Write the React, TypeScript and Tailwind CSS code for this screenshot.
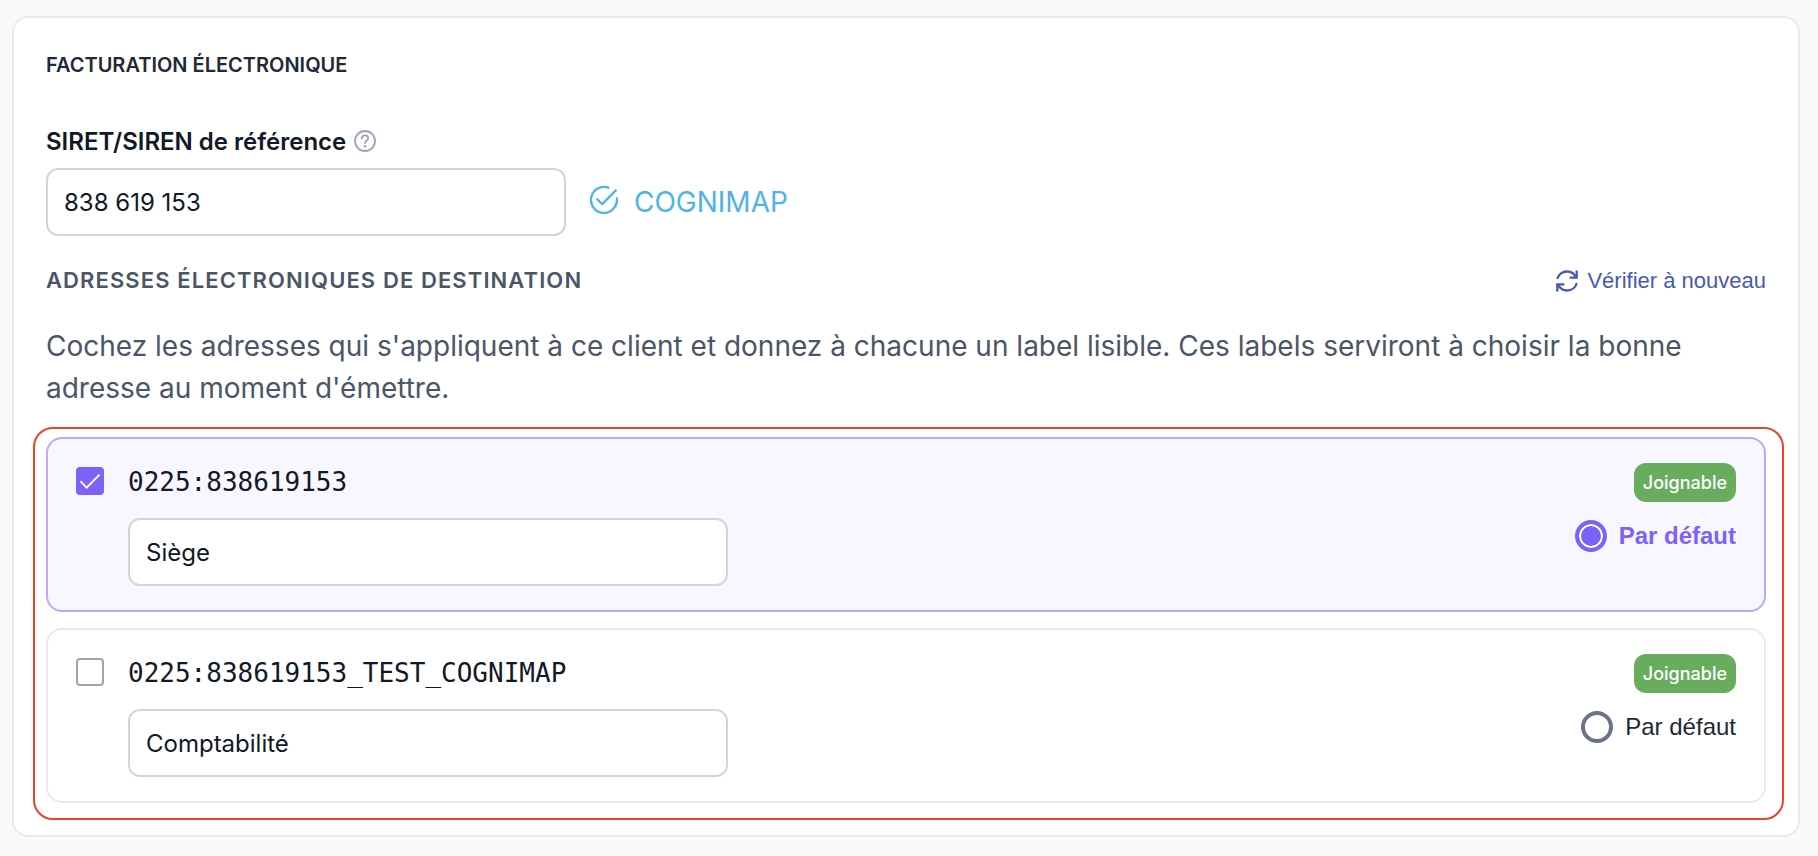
import React from 'react';

type Adresse = {
  id: string;
  label: string;
  joignable: boolean;
};

const ADRESSES: Adresse[] = [
  { id: '0225:838619153', label: 'Siège', joignable: true },
  { id: '0225:838619153_TEST_COGNIMAP', label: 'Comptabilité', joignable: true },
];

const inputClass =
  'h-[68px] rounded-xl border-2 border-[#d1d5db] bg-white px-4 text-2xl text-[#111827] outline-none';

// --- Icons ---
const HelpIcon: React.FC = () => (
  <svg className="size-[22px] text-[#9ca3b8]" viewBox="0 0 22 22" fill="none" stroke="currentColor" strokeWidth="1.8">
    <circle cx="11" cy="11" r="10" />
    <path d="M7.8 8.4c0-1.9 1.4-3 3.2-3s3.2 1.1 3.2 2.8c0 2.2-3.1 2.3-3.1 4.8" strokeLinecap="round" />
    <circle cx="11.1" cy="16.2" r="1.3" fill="currentColor" stroke="none" />
  </svg>
);

const ValidIcon: React.FC = () => (
  <svg
    className="mb-1 size-7"
    viewBox="0 0 28 28"
    fill="none"
    stroke="currentColor"
    strokeWidth="2.3"
    strokeLinecap="round"
    strokeLinejoin="round"
  >
    <path d="M18.4 1.7A13 13 0 1 0 26.900 12.500" />
    <path d="M7.200 13.300l5 4.800L25.800 4.400" />
  </svg>
);

const RefreshIcon: React.FC = () => (
  <svg className="size-[22px]" viewBox="0 0 22 22" fill="none" stroke="currentColor" strokeWidth="2.3">
    <path d="M1.200 9C2.400 4.600 6.200 1.500 11 1.500c4 0 7.200 2.200 9 5.700" />
    <path d="M20.700 0.500v7.100h-7" />
    <path d="M20.800 13c-1.200 4.400-5 7.500-9.800 7.500-4 0-7.200-2.200-9-5.700" />
    <path d="M1.300 21.500v-7.100h7" />
  </svg>
);

// --- Adresse ---
const AdresseCard: React.FC<{
  adresse: Adresse;
  checked: boolean;
  isDefault: boolean;
  onToggle: () => void;
  onDefault: () => void;
}> = ({ adresse, checked, isDefault, onToggle, onDefault }) => {
  const [label, setLabel] = React.useState(adresse.label);

  return (
    <li
      className={`flex items-start gap-6 rounded-2xl border-2 px-7 pt-6 pb-6 ${
        checked ? 'border-[#b9abf8] bg-[#f8f6ff]' : 'border-[#e9eaef] bg-white'
      }`}
    >
      <span className="relative mt-1 size-7 shrink-0">
        <input
          id={adresse.id}
          type="checkbox"
          checked={checked}
          onChange={onToggle}
          className="block size-7 appearance-none rounded border-2 border-[#9ca3b5] bg-white checked:border-[#7c62f8] checked:bg-[#7c62f8]"
        />
        {checked && (
          <svg
            className="pointer-events-none absolute inset-0 size-7 text-white"
            viewBox="0 0 28 28"
            fill="none"
            stroke="currentColor"
            strokeWidth="1.8"
          >
            <path d="M4.400 14.200l6.200 6.400L23.600 7.600" />
          </svg>
        )}
      </span>
      <div className="flex min-w-0 flex-1 flex-col gap-4">
        <label
          htmlFor={adresse.id}
          className="font-['DejaVu_Sans_Mono',monospace] text-[26px] leading-[39px] text-[#111827]"
        >
          {adresse.id}
        </label>
        <input
          type="text"
          aria-label={`Label de l'adresse ${adresse.id}`}
          value={label}
          onChange={e => setLabel(e.target.value)}
          className={`${inputClass} w-full max-w-[600px]`}
        />
      </div>
      <div className="flex shrink-0 flex-col items-end gap-4">
        {adresse.joignable && (
          <span className="flex h-[39px] items-center rounded-xl bg-[#68ad5d] px-[9px] text-lg font-medium text-white">
            Joignable
          </span>
        )}
        <label
          className={`flex items-center gap-3 font-['Liberation_Sans',Arial,sans-serif] text-2xl leading-9 ${
            isDefault ? 'font-bold text-[#7c62f8]' : 'text-[#1f2937]'
          }`}
        >
          <input
            type="radio"
            name="adresse-defaut"
            checked={isDefault}
            onChange={onDefault}
            className="size-8 appearance-none rounded-full border-4 border-[#6b7389] bg-white checked:border-[#7c62f8] checked:bg-[#7c62f8] checked:shadow-[inset_0_0_0_2px_white]"
          />
          Par défaut
        </label>
      </div>
    </li>
  );
};

const App: React.FC = () => {
  const [siret, setSiret] = React.useState('838 619 153');
  const [selection, setSelection] = React.useState<string[]>([ADRESSES[0].id]);
  const [defaut, setDefaut] = React.useState(ADRESSES[0].id);

  const toggle = (id: string) =>
    setSelection(prev => (prev.includes(id) ? prev.filter(x => x !== id) : [...prev, id]));

  return (
    <div className="min-h-screen bg-[#f9fafc] pt-4 pr-[18px] pb-[18px] pl-3 font-['Inter',sans-serif]">
      <section className="rounded-2xl border-2 border-[#e9eaef] bg-white px-8 pt-[31px] pb-[15px]">
        <h2 className="text-xl leading-8 font-semibold text-[#1f2937]">FACTURATION ÉLECTRONIQUE</h2>

        <div className="mt-[45px] flex items-center gap-2">
          <label htmlFor="siret" className="text-2xl font-semibold text-[#111827]">
            SIRET/SIREN de référence
          </label>
          <button type="button" aria-label="Aide" className="mb-0.5">
            <HelpIcon />
          </button>
        </div>
        <div className="mt-[10px] flex items-center gap-6">
          <input
            id="siret"
            type="text"
            value={siret}
            onChange={e => setSiret(e.target.value)}
            className={`${inputClass} w-full max-w-[520px]`}
          />
          <div className="flex items-center gap-4 text-[#4fb3ea]">
            <ValidIcon />
            <span className="text-[28px]">COGNIMAP</span>
          </div>
        </div>

        <div className="mt-7 flex items-end justify-between">
          <h3 className="text-[22px] leading-8 font-semibold tracking-wider text-[#4b5568]">
            ADRESSES ÉLECTRONIQUES DE DESTINATION
          </h3>
          <button
            type="button"
            className="flex items-center gap-[9px] font-['Liberation_Sans',Arial,sans-serif] text-[22px] leading-[30px] text-[#4759b0]"
          >
            <RefreshIcon />
            Vérifier à nouveau
          </button>
        </div>

        <p className="mt-[29px] text-[28px] leading-[42px] text-[#4b5568]">
          Cochez les adresses qui s'appliquent à ce client et donnez à chacune un label lisible. Ces labels serviront à
          choisir la bonne adresse au moment d'émettre.
        </p>

        {/* Red frame sits slightly outside the content column */}
        <div className="mt-[18px] -mr-[18px] -ml-[13px] rounded-[20px] border-2 border-[#e9432a] pt-2 pr-4 pb-[15px] pl-[11px]">
          <ul className="flex flex-col gap-4">
            {ADRESSES.map(adresse => (
              <AdresseCard
                key={adresse.id}
                adresse={adresse}
                checked={selection.includes(adresse.id)}
                isDefault={defaut === adresse.id}
                onToggle={() => toggle(adresse.id)}
                onDefault={() => setDefaut(adresse.id)}
              />
            ))}
          </ul>
        </div>
      </section>
    </div>
  );
};

export default App;
